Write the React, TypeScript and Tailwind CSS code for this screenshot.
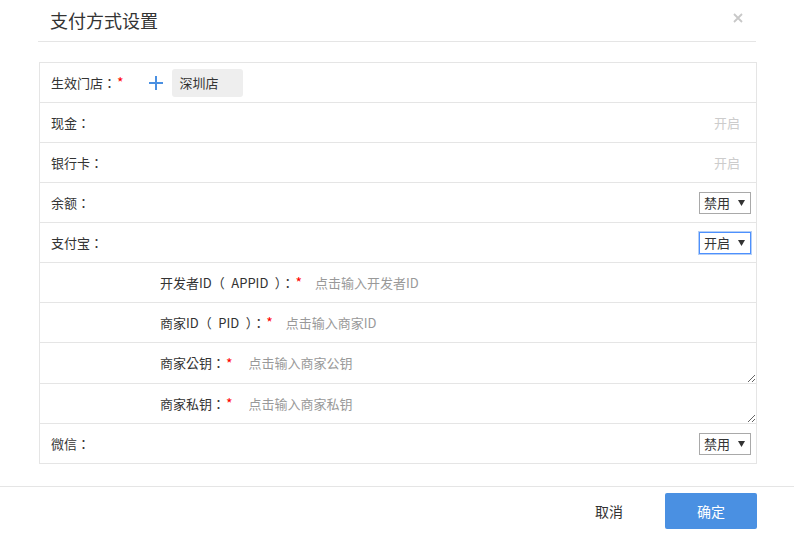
import React from 'react';

const font = { fontFamily: '"Noto Sans CJK SC", "Microsoft YaHei", sans-serif' };
const labelFont = { fontFamily: '"Noto Sans CJK TC", "Noto Sans CJK SC", sans-serif' };

function Star() {
  return <span className="text-[#f00] ml-[1px] text-[14px]">*</span>;
}

function Select({ value, focused }: { value: string; focused?: boolean }) {
  return (
    <div
      className={
        'flex h-[22px] w-[52px] items-center justify-between pl-[4px] pr-[5px] text-[13px] text-[#333] bg-white ' +
        (focused ? 'border border-[#4d90fe] shadow-[0_0_0_1px_#b5cff5]' : 'border border-[#a9a9a9]')
      }
    >
      <span>{value}</span>
      <svg width="7" height="6" viewBox="0 0 7 6">
        <path d="M0 0h7L3.5 6z" fill="#333" />
      </svg>
    </div>
  );
}

function Row({ label, children, star }: { label: string; children?: React.ReactNode; star?: boolean }) {
  return (
    <div className="flex h-[40px] items-center border-b border-[#e5e5e5] pl-[11px] pr-[5px]">
      <span className="text-[13px] text-[#333]" style={labelFont}>{label}</span>
      {star && <Star />}
      <div className="flex flex-1 items-center justify-end">{children}</div>
    </div>
  );
}

function SubRow({ label, placeholder, gap, h }: { label: string; placeholder: string; gap: string; h?: string }) {
  return (
    <div className={'flex items-center border-b border-[#e5e5e5] pl-[120px] ' + (h ?? 'h-[40px]')}>
      <span className="text-[13px] text-[#333] whitespace-pre" style={labelFont}>{label}</span>
      <Star />
      {h ? (
        <textarea
          placeholder={placeholder}
          className={'h-full flex-1 resize-y border-0 pt-[10px] pb-0 text-[13px] outline-none placeholder:text-[#999] ' + gap}
          style={font}
        />
      ) : (
        <input
          placeholder={placeholder}
          className={'flex-1 border-0 text-[13px] outline-none placeholder:text-[#999] ' + gap}
          style={font}
        />
      )}
    </div>
  );
}

export default function App() {
  return (
    <div className="h-[534px] w-[794px] bg-white flex flex-col" style={font}>
      <div className="mx-[38px] flex h-[42px] items-center justify-between border-b border-[#e5e5e5] pl-[12px] pr-[13px]">
        <h1 className="text-[18px] text-[#333] -mt-[1px]">支付方式设置</h1>
        <svg className="-mt-[6px]" width="10" height="10" viewBox="0 0 10 10">
          <path d="M1 1l8 8M9 1l-8 8" stroke="#c8c8c8" strokeWidth="1.8" />
        </svg>
      </div>

      <div className="ml-[39px] mt-[20px] w-[718px] border border-b-0 border-[#e5e5e5]">
        <div className="flex h-[40px] items-center border-b border-[#e5e5e5] pl-[11px]">
          <span className="text-[13px] text-[#333]" style={labelFont}>生效门店：</span>
          <Star />
          <svg className="ml-[25px]" width="14" height="14" viewBox="0 0 14 14">
            <path d="M7 0v14M0 7h14" stroke="#4a90e2" strokeWidth="2" />
          </svg>
          <div className="ml-[9px] flex h-[28px] w-[71px] items-center rounded-[3px] bg-[#eee] pl-[8px] text-[13px] text-[#333]">
            深圳店
          </div>
        </div>
        <Row label="现金：">
          <span className="mr-[11px] text-[13px] text-[#ccc]">开启</span>
        </Row>
        <Row label="银行卡：">
          <span className="mr-[11px] text-[13px] text-[#ccc]">开启</span>
        </Row>
        <Row label="余额：">
          <Select value="禁用" />
        </Row>
        <Row label="支付宝：">
          <Select value="开启" focused />
        </Row>
        <SubRow label={'开发者ID（\u2002APPID\u2002）：'} placeholder="点击输入开发者ID" gap="ml-[13px]" />
        <SubRow label={'商家ID（\u2002PID\u2002）：'} placeholder="点击输入商家ID" gap="ml-[13px]" />
        <SubRow label="商家公钥：" placeholder="点击输入商家公钥" gap="ml-[16px]" h="h-[41px]" />
        <SubRow label="商家私钥：" placeholder="点击输入商家私钥" gap="ml-[16px]" h="h-[40px]" />
        <Row label="微信：">
          <Select value="禁用" />
        </Row>
      </div>

      <div className="mt-[22px] flex h-[48px] items-start justify-end gap-[10px] border-t border-[#e5e5e5] pt-[6px] pr-[37px]">
        <button className="h-[36px] w-[92px] text-[14px] text-[#333]">取消</button>
        <button className="h-[36px] w-[92px] rounded-[2px] bg-[#4a90e2] text-[14px] text-white">确定</button>
      </div>
    </div>
  );
}
